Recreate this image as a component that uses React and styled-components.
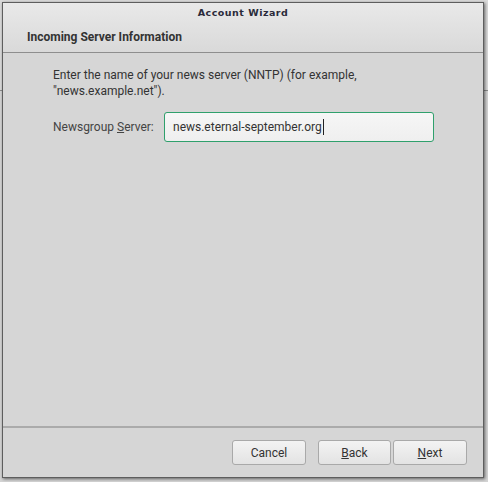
import React from "react";
import styled, { createGlobalStyle } from "styled-components";

const GlobalStyle = createGlobalStyle`
  html, body {
    margin: 0;
    padding: 0;
  }
  body {
    width: 488px;
    height: 482px;
    overflow: hidden;
    background: linear-gradient(
      to bottom,
      #dadada 0,
      #dadada 90px,
      #8c8c8c 90px,
      #8c8c8c 91px,
      #d4d4d4 91px
    );
    font-family: Roboto, "Liberation Sans", sans-serif;
  }
`;

const Window = styled.div`
  margin: 2px 0 0 2px;
  width: 480px;
  height: 474px;
  border: 1px solid #5e5e5e;
  box-shadow: 1px 1px 3px rgba(0, 0, 0, 0.55);
  background: #d6d6d6;
  display: flex;
  flex-direction: column;
`;

const Top = styled.div`
  background: linear-gradient(to bottom, #e9e9e9, #d9d9d9);
  border-bottom: 1px solid #8e8e8e;
`;

const TitleBar = styled.div`
  height: 18px;
  display: flex;
  align-items: center;
  justify-content: center;
  font-family: "DejaVu Sans", sans-serif;
  font-weight: bold;
  font-size: 9.5px;
  letter-spacing: 0.5px;
  color: #2a2a3a;
`;

const PageHeader = styled.div`
  height: 31px;
  display: flex;
  align-items: center;
  padding-left: 24px;
  font-weight: bold;
  font-size: 12px;
  color: #333;
`;

const Content = styled.div`
  flex: 1;
  padding: 14px 20px 0 50px;
  color: #333;
  font-size: 12px;
`;

const Description = styled.p`
  margin: 0;
  line-height: 16px;
`;

const FieldRow = styled.div`
  display: flex;
  align-items: center;
  margin-top: 13px;
`;

const Label = styled.label`
  width: 111px;
  color: #444;
`;

const Accel = styled.span`
  text-decoration: underline;
`;

const Input = styled.div`
  width: 260px;
  height: 28px;
  border: 1px solid #2fa06c;
  border-radius: 3px;
  background: linear-gradient(to bottom, #f6f6f6, #efefef);
  display: flex;
  align-items: center;
  padding-left: 8px;
  color: #333;
`;

const Caret = styled.span`
  display: inline-block;
  width: 1px;
  height: 16px;
  background: #222;
  margin-left: 1px;
`;

const Footer = styled.div`
  height: 49px;
  border-top: 2px solid #ababab;
  display: flex;
  align-items: center;
  justify-content: flex-end;
  padding-right: 16px;
`;

const Button = styled.button`
  width: ${({ $w }) => $w}px;
  height: 25px;
  margin-left: ${({ $gap }) => $gap}px;
  border: 1px solid #a9a9a9;
  border-radius: 3px;
  background: linear-gradient(to bottom, #f3f3f3, #e3e3e3);
  font-family: Roboto, "Liberation Sans", sans-serif;
  font-size: 12px;
  color: #333;
  padding: 0;
`;

export default function App() {
  return (
    <>
      <GlobalStyle />
      <Window>
        <Top>
          <TitleBar>Account Wizard</TitleBar>
          <PageHeader>Incoming Server Information</PageHeader>
        </Top>
        <Content>
          <Description>
            Enter the name of your news server (NNTP) (for example,
            <br />
            "news.example.net").
          </Description>
          <FieldRow>
            <Label>
              Newsgroup <Accel>S</Accel>erver:
            </Label>
            <Input>
              news.eternal-september.org
              <Caret />
            </Input>
          </FieldRow>
        </Content>
        <Footer>
          <Button $w={74} $gap={0}>Cancel</Button>
          <Button $w={73} $gap={12}>
            <Accel>B</Accel>ack
          </Button>
          <Button $w={74} $gap={2}>
            <Accel>N</Accel>ext
          </Button>
        </Footer>
      </Window>
    </>
  );
}
